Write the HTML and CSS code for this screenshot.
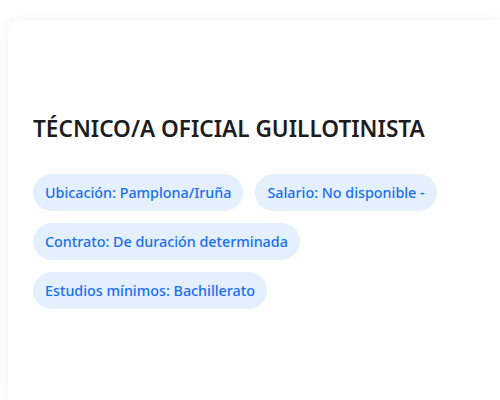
FILE: index.html
```html
<!DOCTYPE html>
<html>
<head>
    <title>Oferta de empleo</title>
    <link rel="stylesheet" href="styles.css">
</head>
<body>
<main class="offer">
    <h2 class="offer-title">TÉCNICO/A OFICIAL GUILLOTINISTA</h2>
    <ul class="tags">
        <li class="tag">Ubicación: Pamplona/Iruña</li>
        <li class="tag">Salario: No disponible -</li>
        <li class="tag">Contrato: De duración determinada</li>
        <li class="tag">Estudios mínimos: Bachillerato</li>
    </ul>
</main>
</body>
</html>
```

FILE: styles.css
```css
html, body {
    height: 100%;
}
body {
    margin: 0;
    padding: 20px 0 0 8px;
    box-sizing: border-box;
    background: #fff;
    font-family: "Noto Sans", "Open Sans", sans-serif;
    overflow: hidden;
}
.offer {
    box-sizing: border-box;
    height: 100%;
    padding: 93px 25px 0;
    background: #fff;
    border-radius: 12px 0 0 0;
    box-shadow: 0 0 12px rgba(0, 0, 0, 0.05);
}
.offer-title {
    margin: 0 0 30px;
    font-size: 22.6px;
    font-weight: 600;
    color: #1d1d1f;
}
.tags {
    display: flex;
    flex-wrap: wrap;
    gap: 12px;
    max-width: 420px;
    margin: 0;
    padding: 0;
    list-style: none;
}
.tag {
    height: 37px;
    padding: 0 12px;
    display: flex;
    align-items: center;
    border-radius: 19px;
    background: #e5f0fe;
    color: #176ff2;
    font-size: 14.3px;
    font-weight: 500;
}
```
